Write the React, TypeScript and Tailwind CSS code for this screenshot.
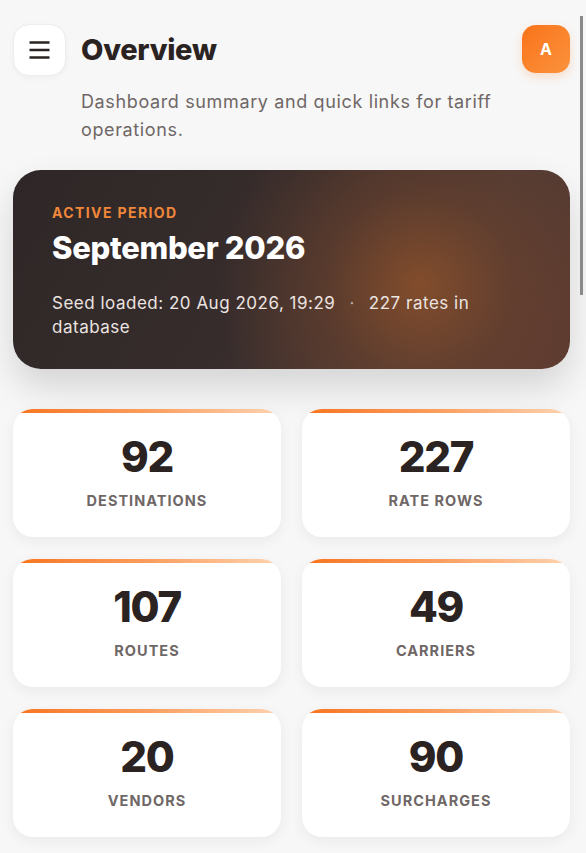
import React from "react";

const stats = [
  { value: "92", label: "DESTINATIONS" },
  { value: "227", label: "RATE ROWS" },
  { value: "107", label: "ROUTES" },
  { value: "49", label: "CARRIERS" },
  { value: "20", label: "VENDORS" },
  { value: "90", label: "SURCHARGES" },
];

export default function App() {
  return (
    <div className="relative min-h-screen bg-[#f7f7f7] font-['Inter',sans-serif] text-[#2b2322]">
      {/* scrollbar thumb overlay */}
      <div className="fixed left-[580px] top-[16px] h-[279px] w-[3px] bg-[#8a8a8a]" />
      <div className="pl-[13px] pr-[16px] pt-[24px] pb-[40px]">
        {/* Header */}
        <header className="flex items-start gap-[15px]">
          <button className="flex h-[52px] w-[53px] shrink-0 items-center justify-center rounded-2xl border border-[#efecec] bg-white shadow-[0_2px_6px_rgba(0,0,0,0.04)]">
            <svg width="21" height="18" viewBox="0 0 21 18" fill="none">
              <path d="M0.5 1.5h20M0.5 9h20M0.5 16.5h20" stroke="#2b2322" strokeWidth="2.4" />
            </svg>
          </button>
          <div className="min-w-0 flex-1">
            <h1 className="text-[29px] font-extrabold leading-[52px] tracking-[-0.01em] text-[#2b2322]">
              Overview
            </h1>
            <p className="mt-[12px] text-[18px] leading-[28px] tracking-[0.035em] text-[#6f6766]">
              Dashboard summary and quick links for tariff operations.
            </p>
          </div>
          <div className="mt-[1px] flex h-[48px] w-[48px] shrink-0 items-center justify-center rounded-[14px] bg-gradient-to-br from-[#f97316] to-[#fb923c] text-[16px] font-bold text-white shadow-[0_4px_10px_rgba(249,115,22,0.2)]">
            A
          </div>
        </header>

        {/* Hero */}
        <section className="mt-[26px] rounded-[28px] bg-[radial-gradient(circle_at_73%_58%,rgba(140,80,42,0.85)_0%,rgba(110,66,44,0.55)_22%,rgba(60,45,45,0)_48%),linear-gradient(120deg,#2f2727_0%,#362c2c_45%,#4e3a34_75%,#5c3a31_100%)] px-[39px] pb-[30px] pt-[32px] shadow-[0_18px_36px_rgba(0,0,0,0.14)]">
          <div className="text-[14px] font-bold tracking-[0.1em] text-[#f0873a]">ACTIVE PERIOD</div>
          <div className="mt-[6px] text-[31px] font-extrabold leading-[38px] tracking-[-0.01em] text-white">
            September 2026
          </div>
          <p className="mt-[24px] text-[17px] leading-[24px] tracking-[0.03em] text-[#ece4e0]">
            Seed loaded: 20 Aug 2026, 19:29<span className="mx-[14px] text-[#b8aaa4]">·</span>227 rates in database
          </p>
        </section>

        {/* Stats */}
        <section className="mt-[40px] grid grid-cols-2 gap-x-[21px] gap-y-[22px]">
          {stats.map((s) => (
            <div
              key={s.label}
              className="relative flex h-[128px] flex-col items-center overflow-hidden rounded-[20px] bg-white shadow-[0_4px_14px_rgba(0,0,0,0.06)]"
            >
              <div className="h-[4px] w-full bg-gradient-to-r from-[#f97316] via-[#fb9d5c] to-[#fed3b0]" />
              <div className="mt-[19px] text-[42px] font-extrabold leading-[50px] tracking-[-0.03em] text-[#2b2322]">
                {s.value}
              </div>
              <div className="mt-[9px] text-[14.5px] font-bold leading-[20px] tracking-[0.07em] text-[#6f6766]">
                {s.label}
              </div>
            </div>
          ))}
        </section>
      </div>
    </div>
  );
}
